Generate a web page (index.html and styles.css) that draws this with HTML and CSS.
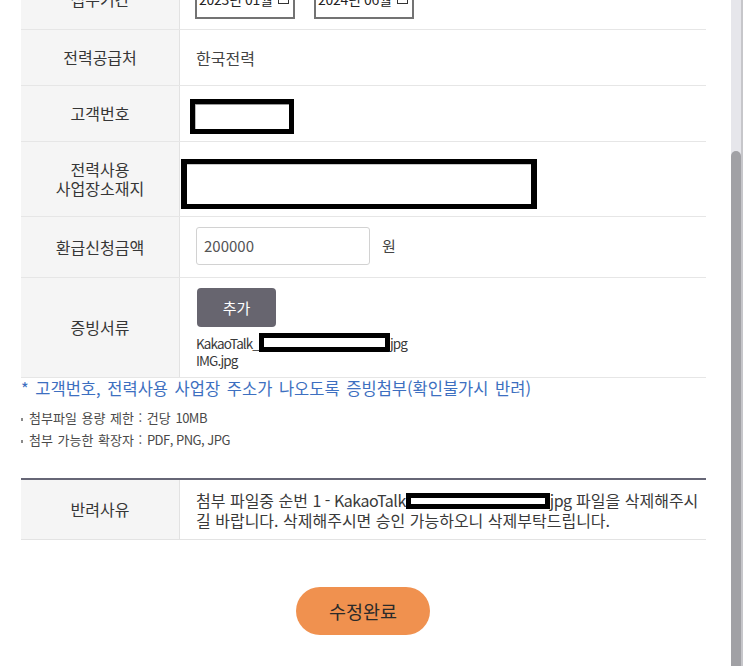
FILE: index.html
```html
<!DOCTYPE html>
<html lang="ko">
<head>
<meta charset="utf-8">
<title>환급신청 수정</title>
<link rel="stylesheet" href="styles.css">
</head>
<body>
<div class="screen">
  <main class="content">
    <div class="form">
      <div class="row row-period">
        <div class="th">접수기간</div>
        <div class="td td-bottom">
          <div class="date-box"><span>2023년 01월</span><span class="cal"></span></div>
          <div class="date-box"><span>2024년 06월</span><span class="cal"></span></div>
        </div>
      </div>
      <div class="row row-56">
        <div class="th">전력공급처</div>
        <div class="td">한국전력</div>
      </div>
      <div class="row row-56">
        <div class="th">고객번호</div>
        <div class="td"><span class="redact redact-customer"></span></div>
      </div>
      <div class="row row-75">
        <div class="th">전력사용<br>사업장소재지</div>
        <div class="td"><span class="redact redact-address"></span></div>
      </div>
      <div class="row row-61">
        <div class="th">환급신청금액</div>
        <div class="td"><div class="amount">200000</div><span class="unit">원</span></div>
      </div>
      <div class="row row-100">
        <div class="th">증빙서류</div>
        <div class="td td-files">
          <button class="btn-add" type="button">추가</button>
          <div class="file">KakaoTalk_<span class="redact redact-file"></span>jpg</div>
          <div class="file">IMG.jpg</div>
        </div>
      </div>
    </div>

    <p class="notice">* 고객번호, 전력사용 사업장 주소가 나오도록 증빙첨부(확인불가시 반려)</p>
    <ul class="notes">
      <li>첨부파일 용량 제한 : 건당 <span class="latin">10MB</span></li>
      <li>첨부 가능한 확장자 : <span class="latin">PDF, PNG, JPG</span></li>
    </ul>

    <div class="reject">
      <div class="th">반려사유</div>
      <div class="td td-reject">
        <p>첨부 파일중 순번 <span class="latin">1 - KakaoTalk</span><span class="redact redact-reason"></span><span class="latin">jpg</span> 파일을 삭제해주시<br>길 바랍니다. 삭제해주시면 승인 가능하오니 삭제부탁드립니다.</p>
      </div>
    </div>

    <div class="actions">
      <button class="btn-done" type="button">수정완료</button>
    </div>
  </main>
  <div class="scrollbar"><div class="thumb"></div></div>
  <div class="edge"></div>
</div>
</body>
</html>
```

FILE: styles.css
```css
html, body {
  margin: 0;
  padding: 0;
  background: #ffffff;
}

body {
  font-family: "Noto Sans CJK KR", "Noto Sans", sans-serif;
  color: #3a3a3a;
}

.screen {
  display: flex;
  height: 666px;
  overflow: hidden;
}

.content {
  width: 731px;
  flex: none;
  box-sizing: border-box;
  padding-left: 21px;
}

.scrollbar {
  width: 10px;
  flex: none;
  background: #e6e6eb;
  display: flex;
  flex-direction: column;
}

.thumb {
  margin-top: 151px;
  flex: 1;
  background: #a1a1a5;
  border-radius: 5px 5px 0 0;
}

.edge {
  width: 2px;
  flex: none;
  background: #c6c6ca;
}

/* form table */
.form {
  width: 685px;
  margin-top: -31px;
}

.row {
  display: flex;
  box-sizing: border-box;
  border-bottom: 1px solid #e6e6e6;
}

.row-period { height: 61px; }
.row-56 { height: 56px; }
.row-75 { height: 75px; }
.row-61 { height: 61px; }
.row-100 { height: 100px; }

.th {
  width: 158px;
  flex: none;
  background: #f5f5f5;
  border-right: 1px solid #e2e2e2;
  display: flex;
  align-items: center;
  justify-content: center;
  text-align: center;
  font-size: 16px;
  line-height: 19px;
  color: #363636;
}

.td {
  flex: 1;
  min-width: 0;
  padding-left: 16px;
  display: flex;
  align-items: center;
  font-size: 16px;
  color: #444;
}

.td-bottom {
  align-items: flex-end;
  padding-bottom: 10px;
  gap: 20px;
}

.date-box {
  width: 100px;
  height: 34px;
  box-sizing: border-box;
  margin-left: -1px;
  border: 2px solid #737373;
  padding: 0 4px 7px 2px;
  display: flex;
  align-items: center;
  justify-content: space-between;
  font-size: 14px;
  letter-spacing: -0.3px;
  color: #222;
  white-space: nowrap;
}

.cal {
  width: 9px;
  height: 9px;
  border: 1px solid #333;
}

/* redaction boxes */
.redact {
  display: inline-block;
  box-sizing: border-box;
  background: #fff;
  border: 5px solid #000;
}

.redact-customer {
  width: 104px;
  height: 35px;
  margin-left: -6px;
  margin-top: 5px;
  box-shadow: inset 0 1px 0 #9a9a9a, inset 1px 0 0 #bcbcbc;
}

.redact-address {
  width: 356px;
  height: 50px;
  margin-left: -15px;
  margin-top: 9px;
  border-width: 5px 6px;
  box-shadow: inset 0 1px 0 #c8c8c8;
}

.redact-file {
  width: 131px;
  height: 19px;
  flex: none;
  margin-top: -1px;
}

.redact-reason {
  width: 144px;
  height: 16px;
  vertical-align: middle;
  margin: -2px 0 0 0;
}

/* amount */
.amount {
  width: 174px;
  height: 38px;
  box-sizing: border-box;
  margin-top: -3px;
  border: 1px solid #d2d2d2;
  border-radius: 3px;
  padding-left: 7px;
  display: flex;
  align-items: center;
  font-size: 15px;
  color: #555;
}

.unit {
  margin-left: 12px;
  margin-top: -3px;
  font-size: 15px;
}

/* files */
.td-files {
  flex-direction: column;
  align-items: flex-start;
  justify-content: flex-start;
  padding-top: 10px;
}

.btn-add {
  width: 79px;
  height: 39px;
  margin-left: 1px;
  border: none;
  border-radius: 4px;
  background: #67656f;
  color: #fff;
  font-family: inherit;
  font-size: 15px;
  padding: 0;
}

.file {
  display: flex;
  align-items: center;
  height: 17px;
  font-size: 13.5px;
  color: #3a3a3a;
  letter-spacing: -0.9px;
}

.btn-add + .file {
  margin-top: 7px;
}

/* notices */
.notice {
  margin: 0;
  font-size: 16.5px;
  line-height: 19px;
  padding-top: 1px;
  color: #3d6fc0;
  word-spacing: 2px;
  white-space: nowrap;
}

.notes {
  list-style: none;
  margin: 9px 0 0;
  padding: 0;
  font-size: 13px;
  line-height: 22px;
  color: #4a4a4a;
  word-spacing: 1px;
}

.notes li::before {
  content: "";
  display: inline-block;
  width: 2px;
  height: 3px;
  background: #8a8a8a;
  vertical-align: middle;
  margin-right: 6px;
}

.latin {
  letter-spacing: -0.5px;
  word-spacing: 0;
}

/* reject reason */
.reject {
  width: 685px;
  display: flex;
  box-sizing: border-box;
  height: 62px;
  margin-top: 27px;
  border-top: 2px solid #666676;
  border-bottom: 1px solid #e3e3e3;
}

.td-reject p {
  margin: 0;
  line-height: 20px;
  color: #3a3a3a;
  white-space: nowrap;
}

.actions {
  width: 685px;
  display: flex;
  justify-content: center;
  margin-top: 47px;
}

.btn-done {
  width: 134px;
  height: 48px;
  border: none;
  border-radius: 24px;
  background: #f0914f;
  color: #2a2a2a;
  font-family: inherit;
  font-size: 18.5px;
  padding: 0;
  margin-left: -1px;
}
```
